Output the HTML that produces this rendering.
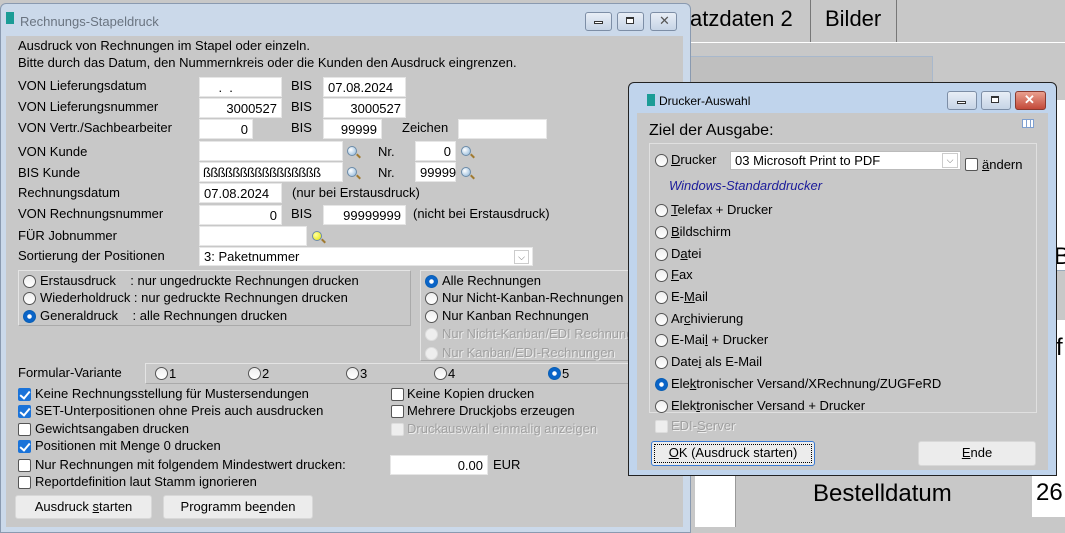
<!DOCTYPE html>
<html><head><meta charset="utf-8"><style>
*{box-sizing:border-box;margin:0;padding:0}
body{width:1065px;height:527px;overflow:hidden;position:relative;background:#c8c8c8;font-family:"Liberation Sans",sans-serif;font-size:13px;color:#000}
.a{position:absolute;white-space:nowrap;line-height:16px}
.in{position:absolute;background:#fff;border:1px solid #e6e6e6;height:20px;line-height:19px;padding:0 4px;white-space:nowrap;font-size:13px}
.r{text-align:right}
.rad{position:absolute;width:13px;height:13px;border-radius:50%;border:1px solid #555;background:linear-gradient(#eee,#fff)}
.rad.on{border-color:#0a5fb4;background:radial-gradient(circle,#fff 0 2px,#0a64c8 2.5px)}
.rad.dis{border-color:#ddd;background:#eee}
.cb{position:absolute;width:13px;height:13px;border:1px solid #555;background:#fff;border-radius:2px}
.cb.on{background:#1a73d9;border-color:#1a73d9}
.cb.on::after{content:"";position:absolute;left:3px;top:0px;width:4px;height:8px;border:solid #fff;border-width:0 2px 2px 0;transform:rotate(40deg)}
.cb.dis{border-color:#ddd;background:#eee}
.dis-t{color:#a0a0a0;text-shadow:1px 1px #eee}
.lupe{position:absolute;width:10px;height:10px;border-radius:50%;background:radial-gradient(circle at 35% 35%,#fff,#8ab4d8);border:1px solid #6a8aa8}
.lupe::after{content:"";position:absolute;left:8px;top:8px;width:5px;height:2px;background:#a07a30;transform:rotate(45deg)}
.lupe.y{background:radial-gradient(circle at 35% 35%,#ffffa0,#e6e600)}
.box{position:absolute;border:1px solid #e4e4e4;border-right-color:#aaa;border-bottom-color:#aaa}
.btn{position:absolute;background:#ececec;border:1px solid #d8d8d8;border-radius:3px;text-align:center;line-height:22px}
.tb{position:absolute;height:19px;border:1px solid #7d8ea6;border-radius:3px;background:linear-gradient(#e8eef6,#c6d4e6)}
.tb.x{background:linear-gradient(#e9a08f,#c3493a);border-color:#8a3a30}
.mn{position:absolute;width:9px;height:3px;border:1px solid #333;background:#fff}
.mx{position:absolute;width:8px;height:7px;border:1px solid #333;border-top-width:2px;background:#fff}
u{text-decoration:underline}
</style></head><body>
<!-- background app -->
<div class="a" style="left:690px;top:6px;font-size:22px;line-height:26px">atzdaten 2</div>
<div style="position:absolute;left:810px;top:0;width:1px;height:42px;background:#777"></div>
<div class="a" style="left:825px;top:6px;font-size:22px;line-height:26px">Bilder</div>
<div style="position:absolute;left:896px;top:0;width:1px;height:42px;background:#777"></div>
<div style="position:absolute;left:690px;top:42px;width:375px;height:1px;background:#fff"></div>
<div style="position:absolute;left:690px;top:56px;width:243px;height:30px;border:1px solid #a8b8cc;background:#bfbfbf"></div>
<div style="position:absolute;left:1040px;top:100px;width:25px;height:375px;background:#fff"></div>
<div style="position:absolute;left:1040px;top:270px;width:25px;height:50px;background:#c8c8c8;border-top:1px solid #9ab"></div>
<div class="a" style="left:1054px;top:243px;font-size:24px;line-height:28px">B</div>
<div class="a" style="left:1056px;top:334px;font-size:24px;line-height:28px">f</div>
<div style="position:absolute;left:695px;top:475px;width:40px;height:52px;background:#fff"></div>
<div style="position:absolute;left:735px;top:475px;width:297px;height:52px;background:#c8c8c8;border-left:1px solid #999"></div>
<div class="a" style="left:813px;top:480px;font-size:24px;line-height:28px">Bestelldatum</div>
<div style="position:absolute;left:1032px;top:475px;width:33px;height:42px;background:#fff"></div>
<div class="a" style="left:1036px;top:479px;font-size:24px;line-height:28px">26</div>

<!-- left dialog -->
<div style="position:absolute;left:0;top:3px;width:691px;height:530px;background:#cbd9ea;border:1px solid #8a9ab0;border-radius:6px 6px 0 0"></div>
<div style="position:absolute;left:6px;top:12px;width:8px;height:12px;background:#1b9c96"></div>
<div class="a" style="left:20px;top:14px;color:#6a7480">Rechnungs-Stapeldruck</div>
<div class="tb" style="left:585px;top:12px;width:27px"></div><div class="mn" style="left:594px;top:21px"></div>
<div class="tb" style="left:617px;top:12px;width:27px"></div><div class="mx" style="left:626px;top:17px"></div>
<div class="tb" style="left:650px;top:12px;width:27px"></div>
<div class="a" style="left:659px;top:13px;color:#555">✕</div>
<div style="position:absolute;left:6px;top:36px;width:677px;height:491px;background:#c8c8c8"></div>

<div class="a" style="left:18px;top:38px">Ausdruck von Rechnungen im Stapel oder einzeln.</div>
<div class="a" style="left:18px;top:55px">Bitte durch das Datum, den Nummernkreis oder die Kunden den Ausdruck eingrenzen.</div>

<div class="a" style="left:18px;top:78px">VON Lieferungsdatum</div>
<div class="in" style="left:199px;top:77px;width:83px">&nbsp;&nbsp;&nbsp;&nbsp;.&nbsp;&nbsp;.</div>
<div class="a" style="left:291px;top:78px">BIS</div>
<div class="in" style="left:323px;top:77px;width:83px">07.08.2024</div>

<div class="a" style="left:18px;top:99px">VON Lieferungsnummer</div>
<div class="in r" style="left:199px;top:98px;width:83px">3000527</div>
<div class="a" style="left:291px;top:99px">BIS</div>
<div class="in r" style="left:323px;top:98px;width:83px">3000527</div>

<div class="a" style="left:18px;top:120px">VON Vertr./Sachbearbeiter</div>
<div class="in r" style="left:199px;top:119px;width:54px">0</div>
<div class="a" style="left:291px;top:120px">BIS</div>
<div class="in r" style="left:323px;top:119px;width:59px">99999</div>
<div class="a" style="left:402px;top:120px">Zeichen</div>
<div class="in" style="left:458px;top:119px;width:89px"></div>

<div class="a" style="left:18px;top:144px">VON Kunde</div>
<div class="in" style="left:199px;top:141px;width:144px"></div>
<div class="lupe" style="left:347px;top:146px"></div>
<div class="a" style="left:378px;top:144px">Nr.</div>
<div class="in r" style="left:415px;top:141px;width:41px">0</div>
<div class="lupe" style="left:461px;top:146px"></div>

<div class="a" style="left:18px;top:165px">BIS Kunde</div>
<div class="in" style="left:199px;top:162px;width:144px;padding:0 3px;letter-spacing:-0.6px">ßßßßßßßßßßßßßßßß</div>
<div class="lupe" style="left:347px;top:167px"></div>
<div class="a" style="left:378px;top:165px">Nr.</div>
<div class="in r" style="left:415px;top:162px;width:41px">99999</div>
<div class="lupe" style="left:461px;top:167px"></div>

<div class="a" style="left:18px;top:185px">Rechnungsdatum</div>
<div class="in" style="left:199px;top:183px;width:83px">07.08.2024</div>
<div class="a" style="left:292px;top:185px">(nur bei Erstausdruck)</div>

<div class="a" style="left:18px;top:206px">VON Rechnungsnummer</div>
<div class="in r" style="left:199px;top:205px;width:83px">0</div>
<div class="a" style="left:291px;top:206px">BIS</div>
<div class="in r" style="left:323px;top:205px;width:83px">99999999</div>
<div class="a" style="left:413px;top:206px">(nicht bei Erstausdruck)</div>

<div class="a" style="left:18px;top:228px">FÜR Jobnummer</div>
<div class="in" style="left:199px;top:226px;width:108px"></div>
<div class="lupe y" style="left:312px;top:231px"></div>

<div class="a" style="left:18px;top:248px">Sortierung der Positionen</div>
<div class="in" style="left:199px;top:247px;width:334px;height:19px;line-height:17px">3: Paketnummer</div>
<div style="position:absolute;left:514px;top:250px;width:15px;height:14px;border:1px solid #ccc;font-size:9px;text-align:center;line-height:12px;color:#666">⌵</div>

<div class="box" style="left:18px;top:270px;width:393px;height:56px"></div>
<div class="rad" style="left:23px;top:275px"></div><div class="a" style="left:40px;top:273px">Erstausdruck&nbsp;&nbsp;&nbsp;&nbsp;: nur ungedruckte Rechnungen drucken</div>
<div class="rad" style="left:23px;top:292px"></div><div class="a" style="left:40px;top:290px">Wiederholdruck : nur gedruckte Rechnungen drucken</div>
<div class="rad on" style="left:23px;top:310px"></div><div class="a" style="left:40px;top:308px">Generaldruck&nbsp;&nbsp;&nbsp;&nbsp;: alle Rechnungen drucken</div>

<div class="box" style="left:420px;top:270px;width:215px;height:91px"></div>
<div class="rad on" style="left:425px;top:275px"></div><div class="a" style="left:442px;top:273px">Alle Rechnungen</div>
<div class="rad" style="left:425px;top:292px"></div><div class="a" style="left:442px;top:290px">Nur Nicht-Kanban-Rechnungen</div>
<div class="rad" style="left:425px;top:310px"></div><div class="a" style="left:442px;top:308px">Nur Kanban Rechnungen</div>
<div class="rad dis" style="left:425px;top:328px"></div><div class="a dis-t" style="left:442px;top:326px">Nur Nicht-Kanban/EDI Rechnung</div>
<div class="rad dis" style="left:425px;top:347px"></div><div class="a dis-t" style="left:442px;top:345px">Nur Kanban/EDI-Rechnungen</div>

<div class="a" style="left:18px;top:365px">Formular-Variante</div>
<div class="box" style="left:145px;top:363px;width:490px;height:21px"></div>
<div class="rad" style="left:155px;top:367px"></div><div class="a" style="left:169px;top:366px">1</div>
<div class="rad" style="left:248px;top:367px"></div><div class="a" style="left:262px;top:366px">2</div>
<div class="rad" style="left:346px;top:367px"></div><div class="a" style="left:360px;top:366px">3</div>
<div class="rad" style="left:434px;top:367px"></div><div class="a" style="left:448px;top:366px">4</div>
<div class="rad on" style="left:548px;top:367px"></div><div class="a" style="left:562px;top:366px">5</div>

<div class="cb on" style="left:18px;top:388px"></div><div class="a" style="left:35px;top:386px">Keine Rechnungsstellung für Mustersendungen</div>
<div class="cb on" style="left:18px;top:405px"></div><div class="a" style="left:35px;top:403px">SET-Unterpositionen ohne Preis auch ausdrucken</div>
<div class="cb" style="left:18px;top:423px"></div><div class="a" style="left:35px;top:421px">Gewichtsangaben drucken</div>
<div class="cb on" style="left:18px;top:440px"></div><div class="a" style="left:35px;top:438px">Positionen mit Menge 0 drucken</div>
<div class="cb" style="left:18px;top:459px"></div><div class="a" style="left:35px;top:457px">Nur Rechnungen mit folgendem Mindestwert drucken:</div>
<div class="cb" style="left:18px;top:476px"></div><div class="a" style="left:35px;top:474px">Reportdefinition laut Stamm ignorieren</div>

<div class="cb" style="left:391px;top:388px"></div><div class="a" style="left:407px;top:386px">Keine Kopien drucken</div>
<div class="cb" style="left:391px;top:405px"></div><div class="a" style="left:407px;top:403px">Mehrere Druckjobs erzeugen</div>
<div class="cb dis" style="left:391px;top:423px"></div><div class="a dis-t" style="left:407px;top:421px">Druckauswahl einmalig anzeigen</div>
<div class="in r" style="left:390px;top:455px;width:98px">0.00</div>
<div class="a" style="left:493px;top:457px">EUR</div>

<div class="btn" style="left:15px;top:495px;width:137px;height:24px">Ausdruck <u>s</u>tarten</div>
<div class="btn" style="left:163px;top:495px;width:150px;height:24px">Programm be<u>e</u>nden</div>

<!-- right dialog -->
<div style="position:absolute;left:628px;top:82px;width:429px;height:394px;background:#c0d4ec;border:1px solid #222;border-radius:6px 6px 0 0"></div>
<div style="position:absolute;left:647px;top:94px;width:8px;height:12px;background:#1b9c96"></div>
<div class="a" style="left:659px;top:93px;font-size:12px">Drucker-Auswahl</div>
<div class="tb" style="left:947px;top:91px;width:30px"></div><div class="mn" style="left:957px;top:101px"></div>
<div class="tb" style="left:981px;top:91px;width:30px"></div><div class="mx" style="left:991px;top:96px"></div>
<div class="tb x" style="left:1015px;top:91px;width:31px"></div>
<div class="a" style="left:1024px;top:92px;color:#fff;font-weight:bold">✕</div>
<div style="position:absolute;left:637px;top:113px;width:411px;height:357px;background:#c8c8c8"></div>
<div style="position:absolute;left:1022px;top:119px;width:12px;height:9px;border:1px solid #7fa0d0;background:repeating-linear-gradient(90deg,#fff 0 3px,#7fa0d0 3px 4px)"></div>
<div class="a" style="left:649px;top:121px;font-size:16px;line-height:20px">Ziel der Ausgabe:</div>
<div class="box" style="left:649px;top:143px;width:388px;height:270px;border-color:#e0e0e0"></div>

<div class="rad" style="left:655px;top:154px"></div><div class="a" style="left:671px;top:152px"><u>D</u>rucker</div>
<div class="in" style="left:730px;top:151px;width:231px;height:19px;line-height:17px;border-color:#bbb">03 Microsoft Print to PDF</div>
<div style="position:absolute;left:942px;top:153px;width:16px;height:15px;border:1px solid #ccc;background:#fff;font-size:9px;text-align:center;line-height:13px;color:#666">⌵</div>
<div class="cb" style="left:965px;top:158px"></div><div class="a" style="left:982px;top:157px"><u>ä</u>ndern</div>
<div class="a" style="left:669px;top:178px;color:#1b1b9a;font-style:italic">Windows-Standarddrucker</div>

<div class="rad" style="left:655px;top:204px"></div><div class="a" style="left:671px;top:202px"><u>T</u>elefax + Drucker</div>
<div class="rad" style="left:655px;top:226px"></div><div class="a" style="left:671px;top:224px"><u>B</u>ildschirm</div>
<div class="rad" style="left:655px;top:248px"></div><div class="a" style="left:671px;top:246px">D<u>a</u>tei</div>
<div class="rad" style="left:655px;top:269px"></div><div class="a" style="left:671px;top:267px"><u>F</u>ax</div>
<div class="rad" style="left:655px;top:291px"></div><div class="a" style="left:671px;top:289px">E-<u>M</u>ail</div>
<div class="rad" style="left:655px;top:313px"></div><div class="a" style="left:671px;top:311px">Ar<u>c</u>hivierung</div>
<div class="rad" style="left:655px;top:334px"></div><div class="a" style="left:671px;top:332px">E-Mai<u>l</u> + Drucker</div>
<div class="rad" style="left:655px;top:356px"></div><div class="a" style="left:671px;top:354px">Date<u>i</u> als E-Mail</div>
<div class="rad on" style="left:655px;top:378px"></div><div class="a" style="left:671px;top:376px">Ele<u>k</u>tronischer Versand/XRechnung/ZUGFeRD</div>
<div class="rad" style="left:655px;top:400px"></div><div class="a" style="left:671px;top:398px">Elek<u>t</u>ronischer Versand + Drucker</div>
<div class="cb dis" style="left:655px;top:420px"></div><div class="a dis-t" style="left:671px;top:418px">EDI-<u>S</u>erver</div>

<div class="btn" style="left:651px;top:441px;width:164px;height:25px;border:1px solid #3a7bd5;outline:1px dotted #000;outline-offset:-4px"><u>O</u>K (Ausdruck starten)</div>
<div class="btn" style="left:918px;top:441px;width:118px;height:25px"><u>E</u>nde</div>
</body></html>
